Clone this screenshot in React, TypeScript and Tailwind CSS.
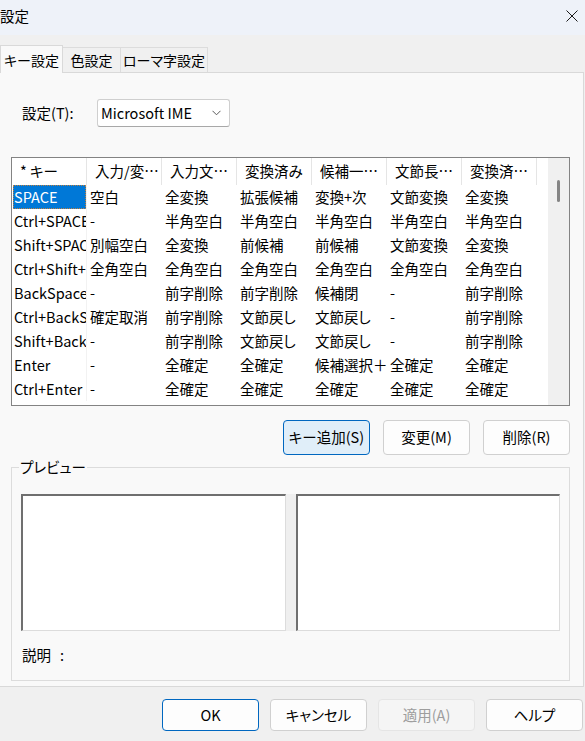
import React from "react";

// key settings table data
const columns = ["* キー", "入力/変…", "入力文…", "変換済み", "候補一…", "文節長…", "変換済…"];

const rows: string[][] = [
  ["SPACE", "空白", "全変換", "拡張候補", "変換+次", "文節変換", "全変換"],
  ["Ctrl+SPACE", "-", "半角空白", "半角空白", "半角空白", "半角空白", "半角空白"],
  ["Shift+SPACE", "別幅空白", "全変換", "前候補", "前候補", "文節変換", "全変換"],
  ["Ctrl+Shift+SPACE", "全角空白", "全角空白", "全角空白", "全角空白", "全角空白", "全角空白"],
  ["BackSpace", "-", "前字削除", "前字削除", "候補閉", "-", "前字削除"],
  ["Ctrl+BackSpace", "確定取消", "前字削除", "文節戻し", "文節戻し", "-", "前字削除"],
  ["Shift+BackSpace", "-", "前字削除", "文節戻し", "文節戻し", "-", "前字削除"],
  ["Enter", "-", "全確定", "全確定", "候補選択＋全確定", "全確定", "全確定"],
  ["Ctrl+Enter", "-", "全確定", "全確定", "全確定", "全確定", "全確定"],
];

function Tab({ label, w, active }: { label: string; w: string; active?: boolean }) {
  if (active) {
    return (
      <div className={`${w} relative z-10 -mb-px h-[28px] flex items-center justify-center text-[14px] bg-[#f9f9f9] border border-b-0 border-[#d9d9d9]`}>
        {label}
      </div>
    );
  }
  return (
    <div className={`${w} h-[25px] flex items-center justify-center text-[14px] bg-[#f0f0f0] border border-b-0 border-l-0 border-[#dcdcdc]`}>
      {label}
    </div>
  );
}

function KeyTable() {
  return (
    <div className="ml-[11px] mt-[30px] w-[559px] h-[249px] border border-[#838383] bg-white flex">
      <div className="w-[536px] flex flex-col">
        {/* header */}
        <div className="h-[27px] flex">
          {columns.map((c) => (
            <div
              key={c}
              className="w-[75px] h-full flex items-center pl-[8px] border-r border-[#e5e5e5] whitespace-nowrap overflow-hidden"
            >
              {c}
            </div>
          ))}
        </div>
        {/* body */}
        {rows.map((r, ri) => (
          <div key={ri} className="h-[24px] flex">
            <div className="w-[75px] h-full pl-[1px] border-r border-[#f2f2f2]">
              <div
                className={`h-full flex items-center pl-[1px] whitespace-nowrap overflow-hidden ${
                  ri === 0 ? "bg-[#0078d7] text-white outline-1 outline-dotted outline-[#c08040] -outline-offset-1" : ""
                }`}
              >
                {r[0]}
              </div>
            </div>
            {r.slice(1).map((cell, ci) => (
              <div key={ci} className="w-[75px] h-full flex items-center pl-[3px] whitespace-nowrap overflow-hidden">
                {cell}
              </div>
            ))}
          </div>
        ))}
      </div>
      <div className="flex-1" />
      {/* scrollbar */}
      <div className="w-[21px] h-full bg-[#f0f0f0] flex justify-center pt-[22px]">
        <div className="w-[3px] h-[22px] rounded-full bg-[#858585]" />
      </div>
    </div>
  );
}

function PreviewBox({ w }: { w: string }) {
  return <div className={`${w} h-[137px] bg-white border-l-2 border-t-2 border-[#6f6f6f] border-r border-b border-r-[#dcdcdc] border-b-[#dcdcdc]`} />;
}

export default function App() {
  return (
    <div className="w-[585px] h-[741px] overflow-hidden flex flex-col bg-[#f0f0f0] text-black text-[14.5px] leading-none [font-feature-settings:'palt'] font-['Noto_Sans_CJK_JP','Noto_Sans',sans-serif]">
      {/* title bar */}
      <div className="h-[35px] shrink-0 bg-[#eef2f9] flex items-center justify-between pr-[7px]">
        <span className="pb-[3px]">設定</span>
        <svg width="12" height="12" viewBox="0 0 12 12" className="mb-[3px]">
          <path d="M0.5 0.5 L11.5 11.5 M11.5 0.5 L0.5 11.5" stroke="#1a1a1a" strokeWidth="1" />
        </svg>
      </div>

      {/* tabs */}
      <div className="h-[37px] shrink-0 flex items-end">
        <Tab label="キー設定" w="w-[63px]" active />
        <Tab label="色設定" w="w-[58px]" />
        <Tab label="ローマ字設定" w="w-[87px]" />
      </div>

      {/* tab panel */}
      <div className="w-[584px] h-[615px] shrink-0 bg-[#f9f9f9] border-t border-r border-b border-[#d9d9d9] flex flex-col">
        <div className="mt-[26px] flex items-center">
          <span className="ml-[22px] w-[75px]">設定(T):</span>
          <div className="w-[133px] h-[28px] bg-white border border-[#cfcfcf] border-b-[#a8a8a8] rounded-[3px] flex items-center justify-between pl-[3px] pr-[8px]">
            <span>Microsoft IME</span>
            <svg width="9" height="6" viewBox="0 0 9 6">
              <path d="M0.5 0.8 L4.5 4.8 L8.5 0.8" fill="none" stroke="#5a5a5a" strokeWidth="1" />
            </svg>
          </div>
        </div>

        <KeyTable />

        <div className="mt-[14px] flex justify-end gap-[13px] pr-[13px]">
          <button className="w-[87px] h-[35px] rounded-[4px] border border-[#0067c0] bg-[#e0eef9]">キー追加(S)</button>
          <button className="w-[87px] h-[35px] rounded-[4px] border border-[#d0d0d0] bg-[#fdfdfd]">変更(M)</button>
          <button className="w-[87px] h-[35px] rounded-[4px] border border-[#d0d0d0] bg-[#fdfdfd]">削除(R)</button>
        </div>

        <fieldset className="mt-[2px] mx-[11px] w-[559px] border border-[#dcdcdc] pl-[9px] pr-[8px] pb-[15px]">
          <legend className="-ml-[2px] px-[1px] leading-[20px]">プレビュー</legend>
          <div className="mt-[17px] flex">
            <PreviewBox w="w-[265px]" />
            <div className="w-[10px] h-[137px] bg-[#efefef]" />
            <PreviewBox w="w-[264px]" />
          </div>
          <div className="mt-[14px] h-[20px] flex items-center ml-[1px]">
            説明<span className="ml-[9px]">:</span>
          </div>
        </fieldset>
      </div>

      {/* footer buttons */}
      <div className="flex-1 flex items-start justify-end gap-[11px] pt-[12px] pr-[2px]">
        <button className="w-[97px] h-[32px] rounded-[4px] border border-[#0067c0] bg-[#fdfdfd]">OK</button>
        <button className="w-[97px] h-[32px] rounded-[4px] border border-[#d0d0d0] bg-[#fdfdfd]">キャンセル</button>
        <button className="w-[97px] h-[32px] rounded-[4px] border border-[#e5e5e5] bg-[#f5f5f5] text-[#9d9d9d]">適用(A)</button>
        <button className="w-[97px] h-[32px] rounded-[4px] border border-[#d0d0d0] bg-[#fdfdfd]">ヘルプ</button>
      </div>
    </div>
  );
}
